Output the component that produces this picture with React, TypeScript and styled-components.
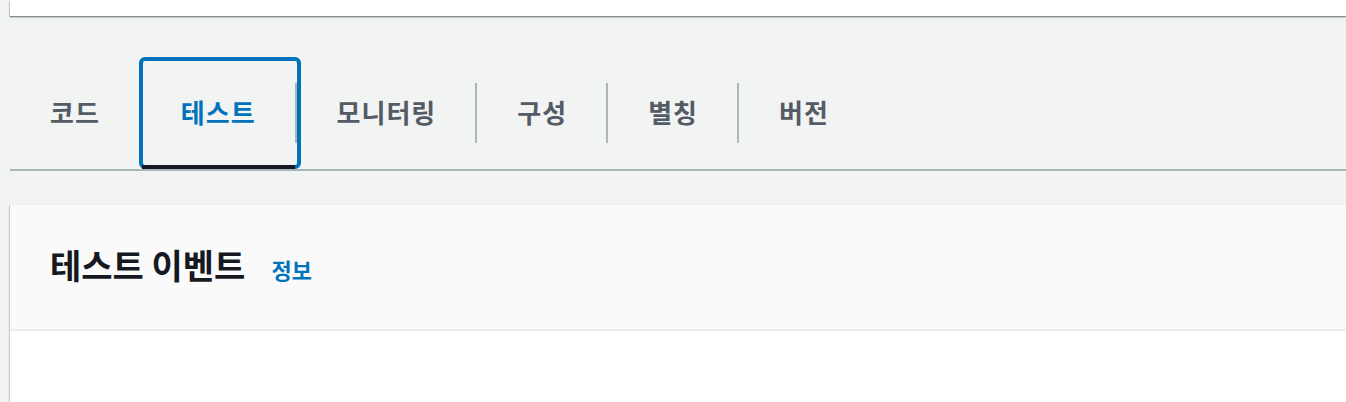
import styled, { createGlobalStyle } from "styled-components";

const GlobalStyle = createGlobalStyle`
  html, body {
    margin: 0;
    padding: 0;
    background: #f2f3f3;
    font-family: "Noto Sans CJK KR", "Noto Sans", sans-serif;
    overflow: hidden;
  }
`;

const Page = styled.div`
  padding-left: 10px;
  min-height: 402px;
`;

const TopCard = styled.div`
  height: 16px;
  background: #ffffff;
  box-shadow: 0 1px 1px 0 rgba(0, 28, 36, 0.3), 0 2px 1px 0 rgba(0, 28, 36, 0.1),
    -1px 1px 1px 0 rgba(0, 28, 36, 0.15);
`;

const TabList = styled.div`
  display: flex;
  margin-top: 41px;
  border-bottom: 2px solid #aab7b8;
`;

const Tab = styled.div<{ $active?: boolean; $last?: boolean }>`
  position: relative;
  display: flex;
  align-items: center;
  height: 112px;
  box-sizing: border-box;
  padding: 0 41px 4px 40px;
  font-size: 26px;
  font-weight: 700;
  letter-spacing: 1px;
  color: ${(p) => (p.$active ? "#0073bb" : "#545b64")};
  cursor: pointer;

  &::after {
    content: "";
    display: ${(p) => (p.$last ? "none" : "block")};
    position: absolute;
    right: 0;
    top: 26px;
    width: 2px;
    height: 60px;
    background: #aab7b8;
    z-index: ${(p) => (p.$active ? 3 : 0)};
  }
`;

const FocusRing = styled.span`
  position: absolute;
  top: 0;
  bottom: 0;
  left: -2px;
  right: -4px;
  border: 4px solid #0073bb;
  border-radius: 6px;
  z-index: 1;
`;

const Underline = styled.span`
  position: absolute;
  left: 1px;
  right: 2px;
  bottom: 0;
  height: 4px;
  background: #16191f;
  z-index: 2;
`;

const Panel = styled.div`
  margin-top: 33px;
  background: #ffffff;
  height: 200px;
  box-shadow: 0 1px 1px 0 rgba(0, 28, 36, 0.3), 1px 1px 1px 0 rgba(0, 28, 36, 0.15),
    -1px 1px 1px 0 rgba(0, 28, 36, 0.15);
`;

const PanelHeader = styled.div`
  display: flex;
  align-items: baseline;
  height: 127px;
  box-sizing: border-box;
  padding: 35px 40px 0;
  background: #fafafa;
  border-top: 1px solid #eaeded;
  border-bottom: 2px solid #eaeded;
`;

const Title = styled.h2`
  margin: 0;
  font-size: 34px;
  font-weight: 700;
  color: #16191f;
`;

const InfoLink = styled.a`
  margin-left: 26px;
  font-size: 22px;
  font-weight: 700;
  color: #0073bb;
  text-decoration: none;
`;

const tabs = ["코드", "테스트", "모니터링", "구성", "별칭", "버전"];

export default function App() {
  return (
    <Page>
      <GlobalStyle />
      <TopCard />
      <TabList>
        {tabs.map((label, i) => {
          const active = label === "테스트";
          return (
            <Tab key={label} $active={active} $last={i === tabs.length - 1}>
              {active && <FocusRing />}
              {active && <Underline />}
              {label}
            </Tab>
          );
        })}
      </TabList>
      <Panel>
        <PanelHeader>
          <Title>테스트 이벤트</Title>
          <InfoLink href="#">정보</InfoLink>
        </PanelHeader>
      </Panel>
    </Page>
  );
}
